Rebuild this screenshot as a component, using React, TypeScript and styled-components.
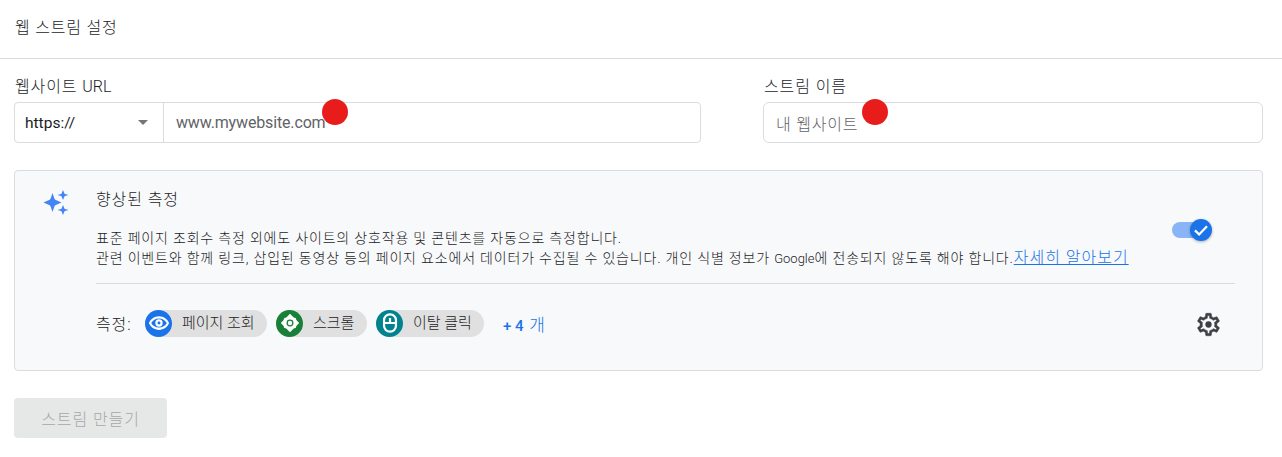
import React from 'react';
import styled, { createGlobalStyle } from 'styled-components';

const GlobalStyle = createGlobalStyle`
  html, body {
    margin: 0;
    padding: 0;
    background: #fff;
  }
  body {
    font-family: Roboto, "Noto Sans CJK KR", sans-serif;
    color: #1b1c1f;
  }
`;

const measures = [
  { label: '페이지 조회', color: '#1a73e8', icon: 'eye', width: 122 },
  { label: '스크롤', color: '#188038', icon: 'scroll', width: 91 },
  { label: '이탈 클릭', color: '#00838f', icon: 'mouse', width: 108 },
];

const ChipIcon: React.FC<{ icon: string; color: string }> = ({ icon, color }) => {
  if (icon === 'eye') {
    return (
      <svg width="22" height="22" viewBox="0 0 24 24">
        <path fill="#fff" d="M12 4.500C7 4.500 2.700 7.600 1 12c1.700 4.400 6 7.500 11 7.500s9.300-3.100 11-7.500c-1.700-4.400-6-7.500-11-7.500zm0 12.500c-3.600 0-6.900-2-8.500-5 1.600-3 4.900-5 8.500-5s6.900 2 8.500 5c-1.600 3-4.900 5-8.500 5z" />
        <circle cx="12" cy="12" r="4" fill="#fff" />
        <circle cx="12" cy="12" r="1.600" fill={color} />
      </svg>
    );
  }
  if (icon === 'scroll') {
    return (
      <svg width="22" height="22" viewBox="0 0 24 24">
        <path fill="#fff" d="M12 2l3.800 3.600c.6.6 1.300.9 2.200.9.300 0 .5.200.5.500 0 .9.300 1.600.9 2.200L22 12l-2.600 2.800c-.6.600-.9 1.300-.9 2.200 0 .3-.2.500-.5.500-.9 0-1.600.3-2.200.9L12 22l-3.800-3.600c-.6-.6-1.300-.9-2.200-.9-.3 0-.5-.2-.5-.5 0-.9-.3-1.600-.9-2.200L2 12l2.600-2.800c.6-.6.9-1.300.9-2.200 0-.3.200-.5.500-.5.900 0 1.600-.3 2.200-.9z" />
        <circle cx="12" cy="12" r="3.800" fill={color} />
        <circle cx="12" cy="12" r="2.400" fill="#fff" />
      </svg>
    );
  }
  return (
    <svg width="22" height="22" viewBox="0 0 24 24" fill="none" stroke="#fff" strokeWidth="2.400">
      <rect x="5.500" y="2.500" width="13" height="19" rx="6.500" />
      <path d="M5.500 12h13M12 6.500V12" />
    </svg>
  );
};

const App: React.FC = () => {
  return (
    <Page>
      <GlobalStyle />
      <Header>웹 스트림 설정</Header>
      <Content>
        <Fields>
          <UrlField>
            <Label>
              웹사이트 <Latin>URL</Latin>
            </Label>
            <UrlBox>
              <Protocol>
                https://
                <Caret />
              </Protocol>
              <UrlInput>
                www.mywebsite.com
                <Dot $left={158} />
              </UrlInput>
            </UrlBox>
          </UrlField>
          <NameField>
            <Label>스트림 이름</Label>
            <NameInput>
              내 웹사이트
              <Dot $left={98} />
            </NameInput>
          </NameField>
        </Fields>

        <Card>
          <CardTop>
            <Sparkle>
              <svg width="28" height="28" viewBox="0 0 28 28" fill="#4285f4">
                <path d="M10.500 4l1.900 5.600q.4 1.100 1.500 1.500l5.600 2.400-5.600 2.400q-1.100.4-1.500 1.500L10.500 23l-1.900-5.600q-.4-1.100-1.500-1.500L1.500 13.500l5.600-2.400q1.100-.4 1.500-1.500z" />
                <path d="M21 1l1.300 3.200q.2.500.7.700L26.500 6 23 7.100q-.5.200-.7.700L21 11l-1.300-3.200q-.2-.5-.7-.7L15.500 6 19 4.900q.5-.2.700-.7z" />
                <path d="M21 16l1.300 3.200q.2.500.7.700l3.500 1.100-3.500 1.100q-.5.200-.7.700L21 26l-1.300-3.200q-.2-.5-.7-.7L15.500 21l3.500-1.100q.5-.2.700-.7z" />
              </svg>
            </Sparkle>
            <CardText>
              <CardTitle>향상된 측정</CardTitle>
              <Description>
                표준 페이지 조회수 측정 외에도 사이트의 상호작용 및 콘텐츠를 자동으로 측정합니다.
                <br />
                관련 이벤트와 함께 링크, 삽입된 동영상 등의 페이지 요소에서 데이터가 수집될 수 있습니다. 개인 식별 정보가{' '}
                <Google>Google</Google>에 전송되지 않도록 해야 합니다.
                <LearnMore>자세히 알아보기</LearnMore>
              </Description>
            </CardText>
            <Toggle>
              <ToggleThumb>
                <svg width="18" height="18" viewBox="0 0 24 24" fill="none" stroke="#fff" strokeWidth="3">
                  <path d="M4 12.500l5.500 5.500L20 7" />
                </svg>
              </ToggleThumb>
            </Toggle>
          </CardTop>
          <Divider />
          <MeasureRow>
            <MeasureLabel>측정:</MeasureLabel>
            {measures.map((m) => (
              <Chip key={m.label} $width={m.width}>
                <ChipBadge $color={m.color}>
                  <ChipIcon icon={m.icon} color={m.color} />
                </ChipBadge>
                <ChipLabel>{m.label}</ChipLabel>
              </Chip>
            ))}
            <More>
              <b>+ 4</b> <MoreUnit>개</MoreUnit>
            </More>
            <Gear>
              <svg width="27" height="27" viewBox="0 0 24 24" fill="#3c4043" stroke="#3c4043" strokeWidth="0.4">
                <path d="M19.430 12.980c.04-.32.07-.64.07-.98s-.03-.66-.07-.98l2.110-1.650c.19-.15.24-.42.12-.64l-2-3.460c-.12-.22-.39-.3-.61-.22l-2.490 1c-.52-.4-1.080-.73-1.690-.98l-.38-2.650C14.460 2.180 14.250 2 14 2h-4c-.25 0-.46.18-.49.42l-.38 2.650c-.61.25-1.170.59-1.690.98l-2.490-1c-.23-.09-.49 0-.61.22l-2 3.460c-.13.22-.07.49.12.64l2.110 1.650c-.04.32-.07.65-.07.98s.03.66.07.98l-2.110 1.650c-.19.15-.24.42-.12.64l2 3.460c.12.22.39.3.61.22l2.490-1c.52.4 1.080.73 1.690.98l.38 2.650c.03.24.24.42.49.42h4c.25 0 .46-.18.49-.42l.38-2.650c.61-.25 1.170-.59 1.690-.98l2.490 1c.23.09.49 0 .61-.22l2-3.460c.12-.22.07-.49-.12-.64l-2.110-1.650zm-1.980-1.710c.04.31.05.52.05.73 0 .21-.02.43-.05.73l-.14 1.130.89.7 1.080.84-.7 1.210-1.270-.51-1.040-.42-.9.68c-.43.32-.84.56-1.250.73l-1.060.43-.16 1.130-.2 1.350h-1.400l-.19-1.350-.16-1.130-1.060-.43c-.43-.18-.83-.41-1.230-.71l-.91-.7-1.060.43-1.270.51-.7-1.210 1.080-.84.89-.7-.14-1.130c-.03-.31-.05-.54-.05-.74s.02-.43.05-.73l.14-1.130-.89-.7-1.080-.84.7-1.210 1.270.51 1.040.42.9-.68c.43-.32.84-.56 1.250-.73l1.060-.43.16-1.130.2-1.350h1.390l.19 1.350.16 1.130 1.060.43c.43.18.83.41 1.230.71l.91.7 1.060-.43 1.270-.51.7 1.210-1.070.85-.89.7.14 1.130z" />
                <circle cx="12" cy="12" r="2.800" stroke="none" />
              </svg>
            </Gear>
          </MeasureRow>
        </Card>

        <CreateButton>스트림 만들기</CreateButton>
      </Content>
    </Page>
  );
};

const Page = styled.div`
  width: 1282px;
  height: 457px;
  overflow: hidden;
`;

const Header = styled.div`
  height: 59px;
  box-sizing: border-box;
  border-bottom: 1px solid #dadce0;
  padding: 18px 15px 0;
  font-size: 16px;
  line-height: 20px;
  font-weight: 300;
  letter-spacing: 0.8px;
`;

const Content = styled.div`
  padding: 0 19px 0 14px;
`;

const Fields = styled.div`
  display: flex;
  justify-content: space-between;
  padding-top: 18px;
`;

const UrlField = styled.div`
  width: 687px;
`;

const NameField = styled.div`
  width: 500px;
`;

const Label = styled.div`
  font-size: 16px;
  line-height: 20px;
  font-weight: 300;
  letter-spacing: 0.9px;
  margin: 0 0 5px 1px;
  height: 20px;
`;

const Latin = styled.span`
  font-size: 16px;
  letter-spacing: 0;
`;

const UrlBox = styled.div`
  display: flex;
  height: 41px;
  box-sizing: border-box;
  border: 1px solid #dadce0;
  border-radius: 4px;
`;

const Protocol = styled.div`
  width: 149px;
  box-sizing: border-box;
  border-right: 1px solid #dadce0;
  padding: 0 15px 0 10px;
  display: flex;
  align-items: center;
  justify-content: space-between;
  font-size: 15.5px;
  font-weight: 400;
`;

const Caret = styled.span`
  width: 0;
  height: 0;
  border-left: 5px solid transparent;
  border-right: 5px solid transparent;
  border-top: 5px solid #757575;
`;

const UrlInput = styled.div`
  position: relative;
  flex: 1;
  display: flex;
  align-items: center;
  padding-left: 12px;
  font-size: 16px;
  font-weight: 400;
  letter-spacing: -0.15px;
  color: #5f6368;
`;

const NameInput = styled.div`
  position: relative;
  height: 41px;
  box-sizing: border-box;
  border: 1px solid #dadce0;
  border-radius: 6px;
  display: flex;
  align-items: center;
  padding-left: 12px;
  font-size: 16px;
  font-weight: 300;
  letter-spacing: 0.8px;
  color: #5f6368;
`;

const Dot = styled.span<{ $left: number }>`
  position: absolute;
  left: ${(p) => p.$left}px;
  top: -4px;
  width: 26px;
  height: 26px;
  border-radius: 50%;
  background: #e91c1c;
`;

const Card = styled.div`
  margin-top: 27px;
  height: 201px;
  box-sizing: border-box;
  background: #f8f9fa;
  border: 1px solid #dadce0;
  border-radius: 4px;
  padding: 18px 27px 0 27px;
`;

const CardTop = styled.div`
  display: flex;
  height: 94px;
`;

const Sparkle = styled.div`
  width: 54px;
  flex: none;
`;

const CardText = styled.div`
  flex: 1;
  white-space: nowrap;
  padding-top: 1px;
`;

const CardTitle = styled.div`
  font-size: 16px;
  line-height: 20px;
  font-weight: 300;
  letter-spacing: 0.9px;
`;

const Description = styled.div`
  margin-top: 18px;
  font-size: 14px;
  line-height: 20px;
  font-weight: 300;
  letter-spacing: 0.82px;
`;

const Google = styled.span`
  font-size: 13px;
  letter-spacing: 0;
`;

const LearnMore = styled.a`
  color: #1a73e8;
  text-decoration: underline;
  font-size: 16px;
  letter-spacing: 1px;
`;

const Toggle = styled.div`
  position: relative;
  width: 34px;
  height: 16px;
  margin: 33px 29px 0 0;
  background: #8ab4f8;
  border-radius: 8px;
  flex: none;
`;

const ToggleThumb = styled.div`
  position: absolute;
  right: -6px;
  top: -3px;
  width: 22px;
  height: 22px;
  border-radius: 50%;
  background: #1a73e8;
  display: flex;
  align-items: center;
  justify-content: center;
  box-shadow: 0 1px 3px rgba(0, 0, 0, 0.3);
`;

const Divider = styled.div`
  height: 1px;
  background: #dadce0;
  margin-left: 54px;
`;

const MeasureRow = styled.div`
  display: flex;
  align-items: center;
  height: 78px;
  margin-left: 54px;
`;

const MeasureLabel = styled.div`
  font-size: 16px;
  font-weight: 300;
  letter-spacing: 0.9px;
  width: 49px;
`;

const Chip = styled.div<{ $width: number }>`
  display: flex;
  align-items: center;
  width: ${(p) => p.$width}px;
  height: 27px;
  background: #e0e0e0;
  border-radius: 14px;
  margin-right: 9px;
`;

const ChipBadge = styled.div<{ $color: string }>`
  width: 27px;
  height: 27px;
  border-radius: 50%;
  background: ${(p) => p.$color};
  display: flex;
  align-items: center;
  justify-content: center;
`;

const ChipLabel = styled.span`
  margin-left: 10px;
  padding-bottom: 3px;
  font-size: 15px;
  font-weight: 300;
`;

const More = styled.div`
  margin-left: 10px;
  font-size: 15px;
  color: #1a73e8;
  font-weight: 300;
  b {
    font-weight: 500;
  }
`;

const MoreUnit = styled.span`
  font-size: 17px;
  margin-left: 2px;
`;

const Gear = styled.div`
  margin: 2px 13px 0 auto;
  display: flex;
`;

const CreateButton = styled.div`
  margin-top: 27px;
  width: 153px;
  height: 40px;
  background: #e6e7e7;
  border-radius: 4px;
  display: flex;
  align-items: center;
  justify-content: center;
  font-size: 16px;
  font-weight: 300;
  letter-spacing: 0.9px;
  color: #a5a7a9;
`;

export default App;
